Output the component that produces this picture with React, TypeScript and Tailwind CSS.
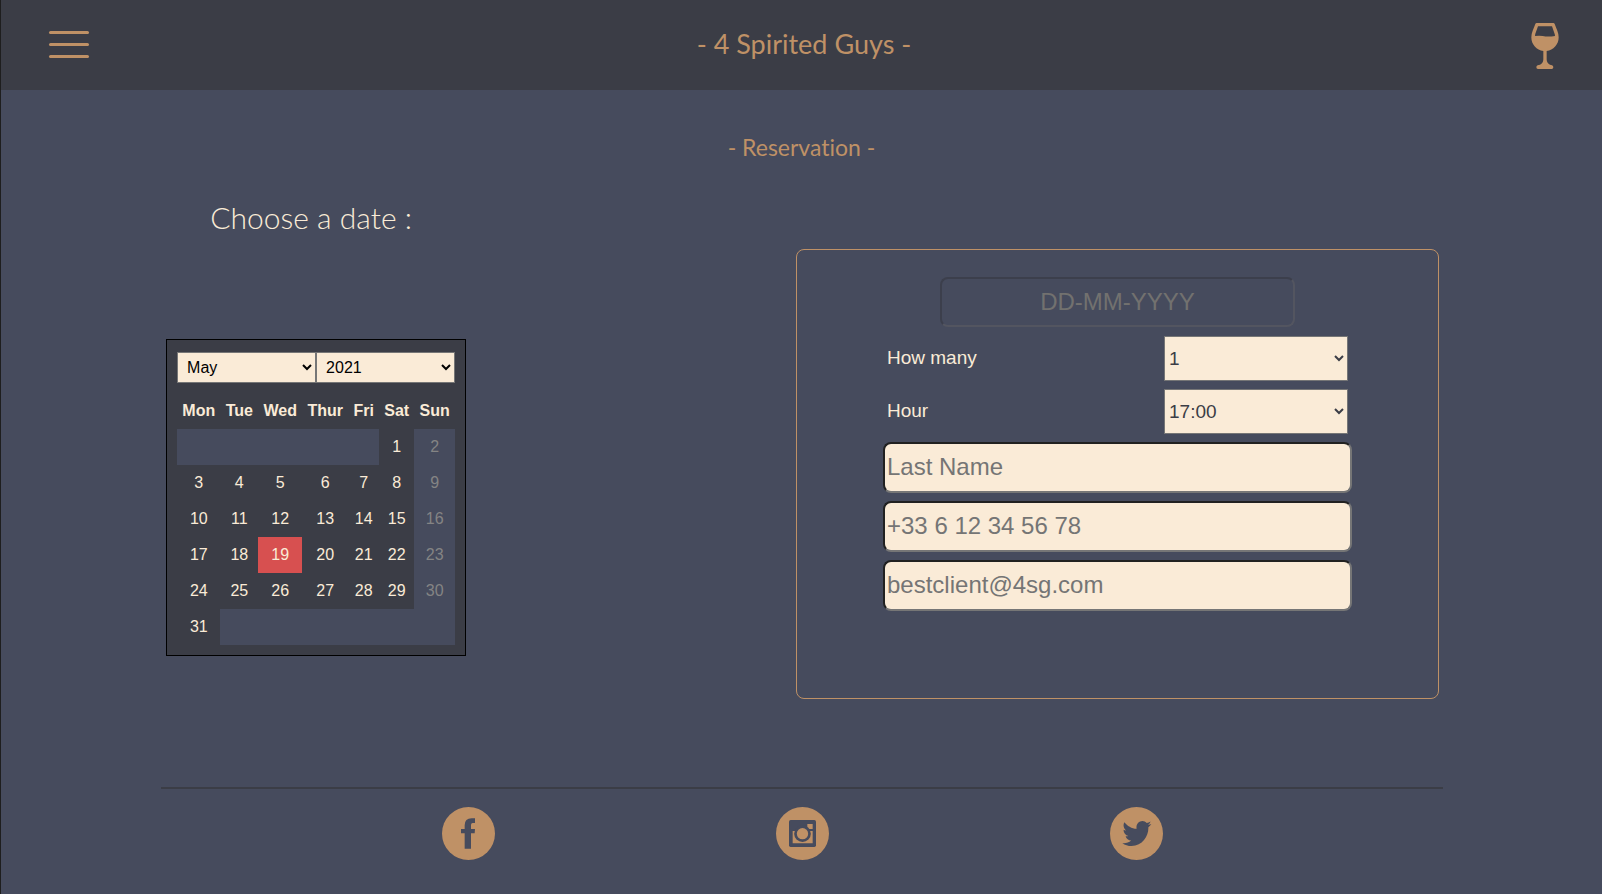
import type { ReactNode } from 'react';

const WEEKDAYS = ['Mon', 'Tue', 'Wed', 'Thur', 'Fri', 'Sat', 'Sun'];
const MONTHS = [
  'January', 'February', 'March', 'April', 'May', 'June',
  'July', 'August', 'September', 'October', 'November', 'December',
];
const YEARS = ['2021', '2022', '2023'];
const HOURS = ['17:00', '18:00', '19:00', '20:00', '21:00', '22:00'];
const WEEKS = [
  [3, 4, 5, 6, 7, 8, 9],
  [10, 11, 12, 13, 14, 15, 16],
  [17, 18, 19, 20, 21, 22, 23],
  [24, 25, 26, 27, 28, 29, 30],
];
const TODAY = 19;

function Day({ day, closed }: { day: number; closed?: boolean }) {
  let look = '';
  if (closed) look = 'bg-[#464b5d] text-[#848484]';
  if (day === TODAY) look = 'bg-[#d75050]';
  return <td className={`h-9 px-[5px] ${look}`}>{day}</td>;
}

function Calendar() {
  const select = 'h-[31px] w-1/2 border border-[#767676] bg-[#faebd7] pl-[5px] text-black';
  return (
    <div className="w-[300px] border border-black bg-[#3b3d46] px-2.5 pt-3 pb-2.5">
      <div className="flex">
        <select aria-label="Month" defaultValue="May" className={select}>
          {MONTHS.map((m) => <option key={m}>{m}</option>)}
        </select>
        <select aria-label="Year" defaultValue="2021" className={select}>
          {YEARS.map((y) => <option key={y}>{y}</option>)}
        </select>
      </div>
      <table className="mt-2.5 w-full text-center text-[#faebd7]">
        <thead>
          <tr>
            {WEEKDAYS.map((d) => <th key={d} className="h-9 px-[5px] font-bold">{d}</th>)}
          </tr>
        </thead>
        <tbody>
          <tr>
            <td colSpan={5} className="h-9 bg-[#464b5d]" />
            <Day day={1} />
            <Day day={2} closed />
          </tr>
          {WEEKS.map((week) => (
            <tr key={week[0]}>
              {week.map((d, i) => <Day key={d} day={d} closed={i === 6} />)}
            </tr>
          ))}
          <tr>
            <Day day={31} />
            <td colSpan={6} className="h-9 bg-[#464b5d]" />
          </tr>
        </tbody>
      </table>
    </div>
  );
}

function SelectRow({ id, label, options }: { id: string; label: string; options: string[] }) {
  return (
    <div className="flex items-center justify-between px-1 text-[19px]">
      <label htmlFor={id} className="text-[#faebd7]">{label}</label>
      <select id={id} className="h-[45px] w-[184px] border border-[#767676] bg-[#faebd7] text-[#3b3d46]">
        {options.map((o) => <option key={o}>{o}</option>)}
      </select>
    </div>
  );
}

function TextField({ label, type, placeholder }: { label: string; type: string; placeholder: string }) {
  return (
    <input
      aria-label={label}
      type={type}
      placeholder={placeholder}
      className="h-[51px] w-full rounded-lg border-2 border-t-[#212121] border-r-[#767676] border-b-[#767676] border-l-[#212121] bg-[#faebd7] px-0.5 pb-px text-2xl text-[#3b3d46] placeholder:text-[#757575]"
    />
  );
}

function BookingForm() {
  return (
    <form className="mt-[52px] h-[450px] w-[50.5%] rounded-lg border border-[#bf9166] pt-[27px]">
      <div className="mx-auto flex w-[73.2%] flex-col gap-2">
        <input
          aria-label="Date"
          disabled
          placeholder="DD-MM-YYYY"
          className="mb-px h-[50px] w-[355px] self-center rounded-lg border-2 border-t-[#3c3f4c] border-r-[#535560] border-b-[#535560] border-l-[#3c3f4c] bg-transparent text-center text-2xl placeholder:text-[#72716f]"
        />
        <SelectRow id="guests" label="How many" options={['1', '2', '3', '4', '5', '6']} />
        <SelectRow id="hour" label="Hour" options={HOURS} />
        <TextField label="Last name" type="text" placeholder="Last Name" />
        <TextField label="Phone" type="tel" placeholder="+33 6 12 34 56 78" />
        <TextField label="Email" type="email" placeholder="bestclient@4sg.com" />
      </div>
    </form>
  );
}

function WineGlass() {
  return (
    <svg viewBox="93 69 84 138" className="h-[46px] w-7" aria-hidden="true">
      <path
        fill="#bf9166"
        fillRule="evenodd"
        d="M110 69H160Q163 69 164 72L172 92Q176 102 176 112C176 134 160 151 140 153V178Q140 190 150 194L156 196Q160 198 160 202Q160 207 155 207H114Q109 207 109 202Q109 198 113 196L120 194Q130 190 130 178V153C110 151 94 134 94 112Q94 102 98 92L106 72Q107 69 110 69ZM114 79L106 101Q105 105 105 108Q118 106 128 108Q144 111 165 108Q165 104 163 99L156 79Z"
      />
    </svg>
  );
}

function SocialLink({ label, children }: { label: string; children: ReactNode }) {
  return (
    <a href="#" aria-label={label}>
      <svg viewBox="0 0 159 159" className="size-[53px]" aria-hidden="true">
        <circle cx="79.5" cy="79.5" r="79.5" fill="#bf9166" />
        {children}
      </svg>
    </a>
  );
}

export default function App() {
  return (
    <div className="min-h-screen border-l border-[#1e1e1e] bg-[#464b5d] font-['Liberation_Sans',Arial,sans-serif] text-base">
      <header className="grid h-[90px] grid-cols-[1fr_auto_1fr] items-center bg-[#3b3d46] pr-[43px] pb-0.5 pl-12">
        <button type="button" aria-label="Menu" className="flex w-10 flex-col gap-[9px]">
          <span className="h-[3px] w-full rounded-sm bg-[#bf9166]" />
          <span className="h-[3px] w-full rounded-sm bg-[#bf9166]" />
          <span className="h-[3px] w-full rounded-sm bg-[#bf9166]" />
        </button>
        <h1 className="font-['Lato',sans-serif] text-[27px] text-[#bf9166]">- 4 Spirited Guys -</h1>
        <a href="#" aria-label="Drinks" className="justify-self-end pt-1"><WineGlass /></a>
      </header>

      <main className="mx-auto w-4/5">
        <h2 className="mt-[41px] text-center font-['Lato',sans-serif] text-[23px]/8 text-[#bf9166] [font-variant-ligatures:none]">
          - Reservation -
        </h2>
        <div className="mt-[34px] flex justify-between pr-[3px] pl-[5px]">
          <section>
            <h3 className="w-[290px] text-center font-['Lato',sans-serif] text-[30px]/10 font-light text-[#faebd7]">
              Choose a date :
            </h3>
            <div className="mt-[102px]"><Calendar /></div>
          </section>
          <BookingForm />
        </div>
      </main>

      <footer className="mt-[88px] ml-[10%] flex w-[80.1%] justify-evenly border-t-2 border-[#3b3d46] pt-[18px]">
        <SocialLink label="Facebook">
          <path fill="#464b5d" d="M68 125V79H57V66H68V55Q68 34 89 34H99V48H92Q87 48 87 54V66H99L98 79H87V125Z" />
        </SocialLink>
        <SocialLink label="Instagram">
          <rect x="39" y="39" width="81" height="81" rx="5" fill="#464b5d" />
          <path fill="#bf9166" d="M50 72H110V109H50ZM94 51H110V66H94Z" />
          <circle cx="79.5" cy="80" r="25" fill="#464b5d" />
          <circle cx="79.5" cy="80" r="17" fill="#bf9166" />
        </SocialLink>
        <SocialLink label="Twitter">
          <path
            fill="#464b5d"
            transform="translate(37 33.4) scale(.17 .18)"
            d="M459.37 151.716c.325 4.548.325 9.097.325 13.645 0 138.72-105.583 298.558-298.558 298.558-59.452 0-114.68-17.219-161.137-47.106 8.447.974 16.568 1.299 25.34 1.299 49.055 0 94.213-16.568 130.274-44.832-46.132-.975-84.792-31.188-98.112-72.772 6.498.974 12.995 1.624 19.818 1.624 9.421 0 18.843-1.3 27.614-3.573-48.081-9.747-84.143-51.98-84.143-102.985v-1.299c13.969 7.797 30.214 12.67 47.431 13.319-28.264-18.843-46.781-51.005-46.781-87.391 0-19.492 5.197-37.36 14.294-52.954 51.655 63.675 129.3 105.258 216.365 109.807-1.624-7.797-2.599-15.918-2.599-24.04 0-57.828 46.782-104.934 104.934-104.934 30.213 0 57.502 12.67 76.67 33.137 23.715-4.548 46.456-13.32 66.599-25.34-7.798 24.366-24.366 44.833-46.132 57.827 21.117-2.273 41.584-8.122 60.426-16.243-14.292 20.791-32.161 39.308-52.628 54.253z"
          />
        </SocialLink>
      </footer>
    </div>
  );
}
